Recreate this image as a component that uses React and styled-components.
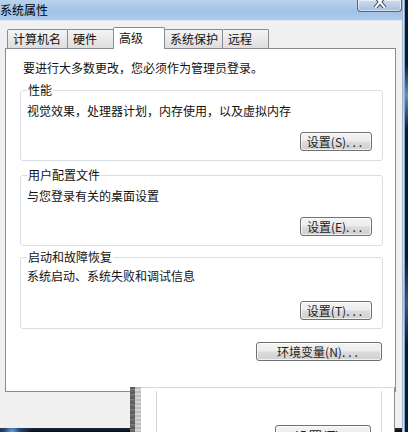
import React from "react";
import styled, { createGlobalStyle } from "styled-components";

const GlobalStyle = createGlobalStyle`
  html, body {
    margin: 0;
    padding: 0;
    width: 408px;
    height: 432px;
    overflow: hidden;
    background: #f0f0f0;
  }
  body {
    font-family: "Noto Sans CJK SC", "Noto Sans", sans-serif;
    font-size: 12px;
    color: #111;
  }
  * {
    box-sizing: border-box;
  }
`;

const Screen = styled.div`
  display: flex;
  width: 408px;
  height: 432px;
  overflow: hidden;
`;

const Win = styled.div`
  position: relative;
  display: flex;
  flex-direction: column;
  width: 403px;
  height: 100%;
  border-right: 1px solid #a9b4c2;
`;

const DesktopEdge = styled.div`
  flex: 1;
  background: linear-gradient(
      180deg,
      transparent 15%,
      rgba(140, 190, 240, 0.7) 22%,
      transparent 30%,
      transparent 60%,
      rgba(120, 170, 230, 0.4) 70%,
      transparent 80%
    ),
    linear-gradient(90deg, #d6e4f2 0 1px, #7fa6d2 1px 2px, #101a2c 2px);
`;

const TitleBar = styled.div`
  display: flex;
  justify-content: space-between;
  align-items: flex-start;
  height: 21px;
  background: linear-gradient(180deg, #b9d3ee 0%, #a2c2e6 60%, #aecbeb 100%);
  border-bottom: 1px solid #dfe8f2;
`;

const Title = styled.div`
  padding-top: 3px;
  font-size: 12px;
  line-height: 14px;
  color: #000;
`;

const CloseBtn = styled.div`
  display: flex;
  justify-content: center;
  align-items: flex-start;
  width: 45px;
  height: 12px;
  border: 1px solid #50678a;
  border-top: none;
  border-radius: 0 0 4px 4px;
  background: linear-gradient(180deg, #cfdcec 0%, #a9bfdb 100%);
  box-shadow: inset 0 0 0 1px rgba(255, 255, 255, 0.5);
`;

const Body = styled.div`
  flex: 1;
  display: flex;
  flex-direction: column;
  padding: 6px 6px 0 5px;
`;

const TabRow = styled.div`
  display: flex;
  align-items: flex-end;
  height: 22px;
  margin: 0 0 -1px 2px;
  position: relative;
  z-index: 1;
`;

const Tab = styled.div`
  width: ${(p) => p.$w}px;
  height: ${(p) => (p.$active ? 22 : 19)}px;
  margin-bottom: ${(p) => (p.$active ? 0 : 1)}px;
  margin-left: -1px;
  padding: ${(p) => (p.$active ? "3px" : "2px")} 0 0 5px;
  border: 1px solid #898c95;
  border-bottom: none;
  border-radius: 2px 2px 0 0;
  background: ${(p) =>
    p.$active ? "#fff" : "linear-gradient(180deg, #f4f4f4 0%, #e8e8e8 55%, #dedede 100%)"};
  line-height: 14px;
  white-space: nowrap;
  &:first-child {
    margin-left: 0;
  }
`;

const Panel = styled.div`
  display: flex;
  flex-direction: column;
  height: 344px;
  padding: 11px 12px 0 14px;
  border: 1px solid #898c95;
  background: #fff;
`;

const Intro = styled.div`
  padding-left: 3px;
  line-height: 16px;
`;

const Group = styled.fieldset`
  margin: ${(p) => p.$mt}px 0 0 0;
  padding: ${(p) => p.$pt}px 10px ${(p) => p.$pb}px 6px;
  min-width: 0;
  border: 1px solid #d6dfe6;
  border-radius: 3px;
`;

const Legend = styled.legend`
  padding: 0 1px;
  font-size: 12px;
  line-height: 12px;
`;

const Desc = styled.div`
  line-height: 14px;
`;

const ButtonRow = styled.div`
  display: flex;
  justify-content: flex-end;
  margin-top: ${(p) => p.$mt}px;
  margin-right: ${(p) => p.$mr || 0}px;
`;

const Button = styled.button`
  width: ${(p) => p.$w}px;
  height: ${(p) => p.$h || 19}px;
  padding: 0;
  border: 1px solid #707070;
  border-radius: 3px;
  background: linear-gradient(180deg, #f3f3f3 0%, #ececec 48%, #dcdcdc 52%, #cfcfcf 100%);
  box-shadow: inset 0 0 0 1px rgba(255, 255, 255, 0.7);
  font-family: inherit;
  font-size: ${(p) => p.$fs || 12}px;
  line-height: 17px;
  color: #222;
  text-align: center;
  white-space: nowrap;
`;

const Dots = styled.span`
  letter-spacing: 3px;
`;

const Filler = styled.div`
  flex: 1;
`;

const Taskbar = styled.div`
  height: 4px;
  background: radial-gradient(circle at 12px 4px, #6aa3dc 0, #24466f 8px, transparent 20px),
    linear-gradient(180deg, #1d2a3d, #070b14);
`;

const Overlay = styled.div`
  position: absolute;
  left: 130px;
  top: 387px;
  right: 7px;
  bottom: 0;
  display: flex;
  overflow: hidden;
`;

const ShadeStrip = styled.div`
  width: 5px;
  background: repeating-linear-gradient(180deg, #5c5c5c 0 2px, #7d7d7d 2px 3px, #666 3px 5px);
`;

const GreyStrip = styled.div`
  width: 6px;
  background: repeating-linear-gradient(180deg, #bdbdbd 0 2px, #d6d6d6 2px 4px);
`;

const Sheet = styled.div`
  flex: 1;
  display: flex;
  flex-direction: column;
  background: #fff;
  border-top: 1px solid #d8d8d8;
  border-right: 1px solid #8d8d8d;
`;

const Caption = styled.div`
  width: 108px;
  height: 9px;
  margin-left: -6px;
  background: repeating-linear-gradient(
      90deg,
      #6a6a6a 0 2px,
      #c4c4c4 2px 3px,
      #8c8c8c 3px 5px,
      #e0e0e0 5px 6px
    ),
    #999;
  opacity: 0.85;
`;

const SheetInner = styled.div`
  flex: 1;
  display: flex;
  justify-content: flex-end;
  align-items: flex-start;
  margin: 3px 12px 0 15px;
  padding: 34px 10px 0 0;
  border-left: 1px solid #d2d2d2;
  border-right: 1px solid #dadada;
`;

const tabs = [
  { label: "计算机名", w: 61 },
  { label: "硬件", w: 47 },
  { label: "高级", w: 52, active: true },
  { label: "系统保护", w: 59 },
  { label: "远程", w: 47 },
];

const groups = [
  {
    title: "性能",
    desc: "视觉效果，处理器计划，内存使用，以及虚拟内存",
    key: "S",
    mt: 8,
    pt: 8,
    gap: 14,
    pb: 9,
  },
  {
    title: "用户配置文件",
    desc: "与您登录有关的桌面设置",
    key: "E",
    mt: 8,
    pt: 8,
    gap: 14,
    pb: 9,
  },
  {
    title: "启动和故障恢复",
    desc: "系统启动、系统失败和调试信息",
    key: "T",
    mt: 5,
    pt: 6,
    gap: 18,
    pb: 8,
  },
];

const CloseIcon = () => (
  <svg width="14" height="8" viewBox="0 0 14 8">
    <path d="M2 -4 L12 8 M12 -4 L2 8" stroke="#3a4a60" strokeWidth="4" />
    <path d="M2 -4 L12 8 M12 -4 L2 8" stroke="#fff" strokeWidth="2" />
  </svg>
);

export default function App() {
  return (
    <>
      <GlobalStyle />
      <Screen>
        <Win>
          <TitleBar>
            <Title>系统属性</Title>
            <CloseBtn>
              <CloseIcon />
            </CloseBtn>
          </TitleBar>
          <Body>
            <TabRow>
              {tabs.map((t) => (
                <Tab key={t.label} $w={t.w} $active={t.active}>
                  {t.label}
                </Tab>
              ))}
            </TabRow>
            <Panel>
              <Intro>要进行大多数更改，您必须作为管理员登录。</Intro>
              {groups.map((g) => (
                <Group key={g.title} $mt={g.mt} $pt={g.pt} $pb={g.pb}>
                  <Legend>{g.title}</Legend>
                  <Desc>{g.desc}</Desc>
                  <ButtonRow $mt={g.gap}>
                    <Button $w={72}>
                      设置({g.key})<Dots>...</Dots>
                    </Button>
                  </ButtonRow>
                </Group>
              ))}
              <ButtonRow $mt={13} $mr={1}>
                <Button $w={126}>
                  环境变量(N)<Dots>...</Dots>
                </Button>
              </ButtonRow>
            </Panel>
            <Filler />
          </Body>
          <Taskbar />
          <Overlay>
            <ShadeStrip />
            <GreyStrip />
            <Sheet>
              <Caption />
              <SheetInner>
                <Button $w={96} $h={22} $fs={14}>
                  设置(T)...
                </Button>
              </SheetInner>
            </Sheet>
          </Overlay>
        </Win>
        <DesktopEdge />
      </Screen>
    </>
  );
}
